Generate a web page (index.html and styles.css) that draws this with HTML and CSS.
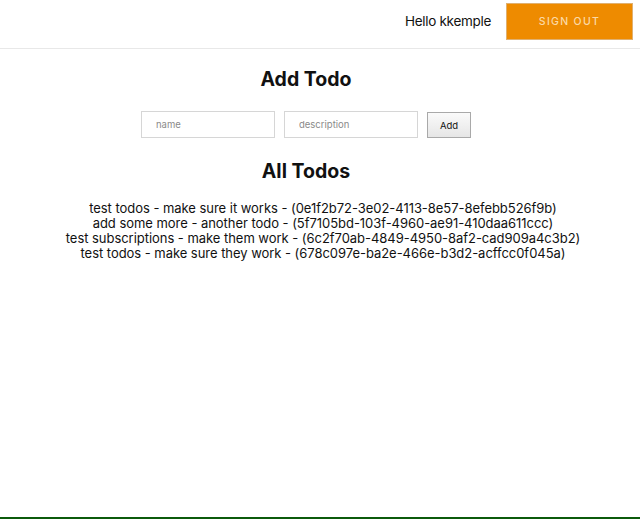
FILE: index.html
```html
<!DOCTYPE html>
<html>
<head>
<meta charset="utf-8">
<link rel="stylesheet" href="styles.css">
</head>
<body>
<div class="page">
  <header class="topbar">
    <span class="greeting">Hello kkemple</span>
    <button class="signout">SIGN OUT</button>
  </header>
  <main class="content">
    <h2 class="title">Add Todo</h2>
    <form class="todo-form">
      <input class="field" type="text" placeholder="name">
      <input class="field" type="text" placeholder="description">
      <button class="add" type="button">Add</button>
    </form>
    <h2 class="title title-all">All Todos</h2>
    <div class="todos">
      <p class="todo">test todos - make sure it works - (0e1f2b72-3e02-4113-8e57-8efebb526f9b)</p>
      <p class="todo">add some more - another todo - (5f7105bd-103f-4960-ae91-410daa611ccc)</p>
      <p class="todo">test subscriptions - make them work - (6c2f70ab-4849-4950-8af2-cad909a4c3b2)</p>
      <p class="todo">test todos - make sure they work - (678c097e-ba2e-466e-b3d2-acffcc0f045a)</p>
    </div>
  </main>
  <div class="bottom-edge"></div>
</div>
</body>
</html>
```

FILE: styles.css
```css
html, body {
  margin: 0;
  padding: 0;
  background: #ffffff;
}
body {
  font-family: Inter, "Liberation Sans", sans-serif;
  color: #111111;
}
.page {
  min-height: 519px;
  display: flex;
  flex-direction: column;
}
.topbar {
  height: 49px;
  border-bottom: 1px solid #e8e8e8;
  display: flex;
  align-items: flex-start;
  justify-content: flex-end;
  padding: 3px 7px 0 0;
  box-sizing: border-box;
  gap: 15px;
}
.greeting {
  font-size: 13.5px;
  letter-spacing: -0.3px;
  line-height: 37px;
  color: #111;
}
.signout {
  width: 127px;
  height: 37px;
  background: #ee8b00;
  border: 1px solid #e0b070;
  color: #fbd9a6;
  font-family: Inter, "Liberation Sans", sans-serif;
  font-size: 10.5px;
  letter-spacing: 1.3px;
  font-weight: 500;
  padding: 0;
}
.content {
  flex: 1;
  display: flex;
  flex-direction: column;
  align-items: center;
}
.title {
  margin: 17px 28px 0 0;
  font-size: 19.5px;
  line-height: 26px;
  font-weight: 700;
}
.todo-form {
  display: flex;
  gap: 9px;
  margin: 19px 28px 0 0;
  align-items: center;
}
.field {
  width: 134px;
  height: 27px;
  box-sizing: border-box;
  border: 1px solid #d6d6d6;
  padding: 0 14px;
  font-family: Inter, "Liberation Sans", sans-serif;
  font-size: 9.5px;
  color: #333;
}
.field::placeholder {
  color: #8a8a8a;
}
.add {
  width: 44px;
  height: 26px;
  margin-top: 1px;
  box-sizing: border-box;
  border: 1px solid #a9a9a9;
  background: linear-gradient(#fafafa, #e6e6e6);
  font-family: Inter, "Liberation Sans", sans-serif;
  font-size: 9.5px;
  color: #111;
  padding: 0;
}
.title-all {
  margin-top: 20px;
}
.todos {
  margin: 17px 0 0 6px;
  text-align: center;
}
.todo {
  margin: 0;
  font-size: 13px;
  letter-spacing: -0.04px;
  line-height: 15px;
  color: #111;
}
.bottom-edge {
  height: 2px;
  background: #0b5a0b;
}
```
